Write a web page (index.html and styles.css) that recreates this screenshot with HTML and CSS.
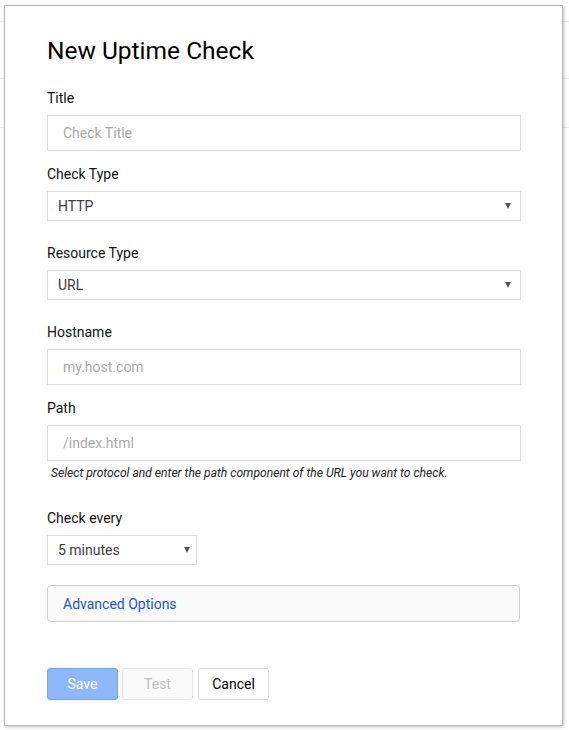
FILE: index.html
```html
<!DOCTYPE html>
<html>
<head>
<meta charset="utf-8">
<link rel="stylesheet" href="styles.css">
</head>
<body>
<div class="backdrop">
  <div class="bg-row r1"></div>
  <div class="bg-row r2"></div>
  <div class="bg-row r3"></div>
</div>
<div class="modal">
  <h1 class="heading">New Uptime Check</h1>

  <div class="label first">Title</div>
  <div class="input"><span class="placeholder">Check Title</span></div>

  <div class="label after-input">Check Type</div>
  <div class="select wide"><span class="value">HTTP</span><span class="caret"></span></div>

  <div class="label after-select">Resource Type</div>
  <div class="select wide"><span class="value">URL</span><span class="caret"></span></div>

  <div class="label after-select">Hostname</div>
  <div class="input"><span class="placeholder">my.host.com</span></div>

  <div class="label after-input">Path</div>
  <div class="input"><span class="placeholder">/index.html</span></div>
  <div class="help">Select protocol and enter the path component of the URL you want to check.</div>

  <div class="label after-help">Check every</div>
  <div class="select narrow"><span class="value">5 minutes</span><span class="caret"></span></div>

  <div class="advanced"><span class="link">Advanced Options</span></div>

  <div class="buttons">
    <div class="btn save">Save</div>
    <div class="btn test">Test</div>
    <div class="btn cancel">Cancel</div>
  </div>
</div>
</body>
</html>
```

FILE: styles.css
```css
html, body {
  margin: 0;
  padding: 0;
  background: #ffffff;
  font-family: Roboto, "Liberation Sans", Arial, sans-serif;
  width: 569px;
  height: 730px;
  overflow: hidden;
}

.backdrop {
  display: flex;
  flex-direction: column;
}

.bg-row {
  border-bottom: 1px solid #ececec;
}
.r1 { height: 21px; }
.r2 { height: 56px; }
.r3 { height: 48px; }

.modal {
  position: absolute;
  left: 4px;
  top: 5px;
  width: 559px;
  height: 721px;
  box-sizing: border-box;
  padding: 0 41px 0 42px;
  background: #ffffff;
  border: 1px solid #b9b9b9;
  box-shadow: 1px 1px 3px rgba(0, 0, 0, 0.25);
  display: flex;
  flex-direction: column;
}

.heading {
  margin: 31px 0 0 0;
  font-size: 24.5px;
  line-height: 28px;
  font-weight: 400;
  color: #000;
}

.label {
  font-size: 14px;
  line-height: 20px;
  color: #111;
  margin-bottom: 7px;
}
.label.first { margin-top: 23px; margin-bottom: 7px; }
.label.after-input { margin-top: 13px; }
.label.after-select { margin-top: 22px; }
.label.after-help { margin-top: 27px; }

.input {
  height: 36px;
  box-sizing: border-box;
  border: 1px solid #dcdcdc;
  display: flex;
  align-items: center;
  padding-left: 15px;
  font-size: 14px;
}

.placeholder {
  color: #a9a9a9;
}

.select {
  height: 30px;
  box-sizing: border-box;
  border: 1px solid #dcdcdc;
  display: flex;
  align-items: center;
  justify-content: space-between;
  padding: 0 9px 0 10px;
  font-size: 14px;
  color: #3c3c3c;
}
.select.narrow {
  width: 150px;
  padding-right: 6px;
}

.caret {
  width: 0;
  height: 0;
  border-left: 3px solid transparent;
  border-right: 3px solid transparent;
  border-top: 6px solid #555;
}

.help {
  margin-top: 4px;
  padding-left: 4px;
  font-size: 12.1px;
  line-height: 16px;
  font-style: italic;
  color: #222;
}

.advanced {
  margin-top: 20px;
  margin-right: 1px;
  height: 37px;
  box-sizing: border-box;
  border: 1px solid #cfcfcf;
  border-radius: 4px;
  background: #fafafa;
  display: flex;
  align-items: center;
  padding-left: 15px;
  font-size: 14px;
}
.link {
  color: #1a55d4;
}

.buttons {
  margin-top: 46px;
  display: flex;
  gap: 4px;
}

.btn {
  width: 71px;
  height: 32px;
  box-sizing: border-box;
  border-radius: 3px;
  display: flex;
  align-items: center;
  justify-content: center;
  font-size: 14px;
}
.save {
  background: #8fb7fb;
  border: 1px solid #74a3f3;
  color: #ffffff;
}
.test {
  background: #fafafa;
  border: 1px solid #e6e6e6;
  color: #bdbdbd;
}
.cancel {
  margin-left: 1px;
  background: #ffffff;
  border: 1px solid #d9d9d9;
  color: #000;
}
```
